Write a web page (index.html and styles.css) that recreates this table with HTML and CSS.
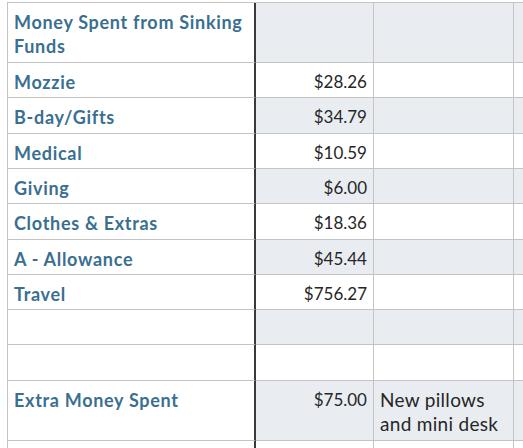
FILE: index.html
```html
<!DOCTYPE html>
<html>
<head>
<meta charset="utf-8">
<link rel="stylesheet" href="styles.css">
</head>
<body>
<div class="sheet">
  <div class="c lbl">Money Spent from Sinking Funds</div><div class="c num g"></div><div class="c g"></div><div class="c g"></div>
  <div class="c lbl">Mozzie</div><div class="c num">$28.26</div><div class="c"></div><div class="c"></div>
  <div class="c lbl">B-day/Gifts</div><div class="c num g">$34.79</div><div class="c g"></div><div class="c g"></div>
  <div class="c lbl">Medical</div><div class="c num">$10.59</div><div class="c"></div><div class="c"></div>
  <div class="c lbl">Giving</div><div class="c num g">$6.00</div><div class="c g"></div><div class="c g"></div>
  <div class="c lbl">Clothes &amp; Extras</div><div class="c num">$18.36</div><div class="c"></div><div class="c"></div>
  <div class="c lbl">A - Allowance</div><div class="c num g">$45.44</div><div class="c g"></div><div class="c g"></div>
  <div class="c lbl">Travel</div><div class="c num">$756.27</div><div class="c"></div><div class="c"></div>
  <div class="c lbl"></div><div class="c num g"></div><div class="c g"></div><div class="c g"></div>
  <div class="c lbl"></div><div class="c num"></div><div class="c"></div><div class="c"></div>
  <div class="c lbl">Extra Money Spent</div><div class="c num g">$75.00</div><div class="c note g">New pillows and mini desk</div><div class="c g"></div>
  <div class="c lbl"></div><div class="c num"></div><div class="c"></div><div class="c"></div>
</div>
</body>
</html>
```
FILE: styles.css
```css
html, body {
  margin: 0;
  padding: 0;
  background: #ffffff;
  overflow: hidden;
}
.sheet {
  margin: 2px 0 0 7px;
  display: grid;
  grid-template-columns: 248px 118px 140px 9px;
  grid-template-rows: 60px 35px 36px 35px 35px 36px 35px 35px 35px 36px 60px 7px;
  border-top: 1px solid #c4c4c4;
  border-left: 1px solid #c4c4c4;
  font-family: "Lato", "Open Sans", sans-serif;
}
.c {
  box-sizing: border-box;
  border-right: 1px solid #c4c4c4;
  border-bottom: 1px solid #c4c4c4;
  padding: 7px 6px 0 6px;
  line-height: 24px;
  font-size: 17px;
  color: #222;
  background: #fff;
  overflow: hidden;
}
.g {
  background: #e9edf2;
}
.lbl {
  font-weight: 700;
  font-size: 18px;
  color: #3a6f90;
  border-right: 2px solid #3a3a3a;
  letter-spacing: 0.7px;
}
.num {
  text-align: right;
  font-weight: 400;
  color: #262626;
}
.note {
  color: #262626;
  font-size: 19px;
  letter-spacing: 0.3px;
}
```
